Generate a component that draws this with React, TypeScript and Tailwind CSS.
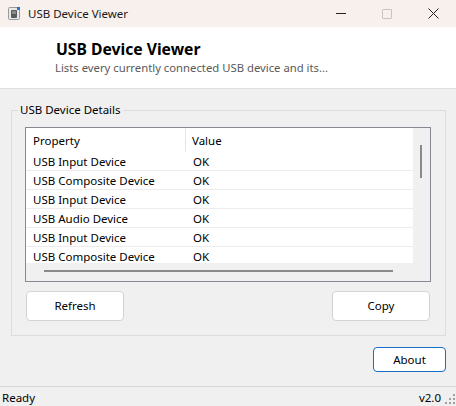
import React from "react";

const rows = [
  "USB Input Device",
  "USB Composite Device",
  "USB Input Device",
  "USB Audio Device",
  "USB Input Device",
  "USB Composite Device",
];

function AppIcon() {
  return (
    <svg width="12" height="13" viewBox="0 0 12 13">
      <rect x="0.5" y="0.5" width="11" height="12" rx="1" fill="#e8e8e8" stroke="#9a9a9a" />
      <rect x="3" y="3" width="6" height="8" rx="1" fill="#5a5a5a" />
      <rect x="4" y="4" width="4" height="3" fill="#8a8a8a" />
      <rect x="9" y="0" width="3" height="3" fill="#2f6fd0" />
    </svg>
  );
}

function Grip() {
  const dots: [number, number][] = [
    [8, 0],
    [8, 4],
    [4, 4],
    [8, 8],
    [4, 8],
    [0, 8],
  ];
  return (
    <svg width="11" height="11" viewBox="0 0 11 11">
      {dots.map(([x, y], i) => (
        <rect key={i} x={x} y={y} width="2" height="2" fill="#a0a0a0" />
      ))}
    </svg>
  );
}

export default function App() {
  return (
    <div className="w-[456px] h-[406px] flex flex-col bg-[#f0f0f0] font-['Noto_Sans',sans-serif] text-[11.5px] text-black overflow-hidden">
      {/* Title bar */}
      <div className="h-[27px] shrink-0 bg-[#f8f0ec] flex items-center">
        <div className="pl-[8px] flex items-center">
          <AppIcon />
        </div>
        <span className="ml-[8px] text-[11.5px] leading-none text-[#1a1a1a]">USB Device Viewer</span>
        <div className="ml-auto flex h-full">
          <div className="w-[46px] h-full flex items-center justify-center">
            <div className="w-[10px] h-[1px] bg-[#222]" />
          </div>
          <div className="w-[46px] h-full flex items-center justify-center">
            <div className="w-[10px] h-[10px] border border-[#c8c4c2] rounded-[1px]" />
          </div>
          <div className="w-[46px] h-full flex items-center justify-center">
            <svg width="11" height="11" viewBox="0 0 11 11">
              <path d="M0.5 0.5 L10.5 10.5 M10.5 0.5 L0.5 10.5" stroke="#222" strokeWidth="1" />
            </svg>
          </div>
        </div>
      </div>

      {/* Header */}
      <div className="h-[62px] shrink-0 bg-white border-b border-[#e0e0e0] pl-[56px] pt-[12px]">
        <div className="text-[15.7px] font-bold leading-[21px] text-black">USB Device Viewer</div>
        <div className="text-[11.3px] leading-[16px] text-[#5a5a5a] -ml-[1px]">
          Lists every currently connected USB device and its...
        </div>
      </div>

      {/* Body */}
      <div className="flex-1 flex flex-col pl-[11px] pr-[10px]">
        <div className="relative mt-[21px] h-[226px] border border-[#dcdcdc] flex flex-col pl-[13px] pr-[14px] pt-[16px]">
          <span className="absolute -top-[9px] left-[6px] px-[2px] bg-[#f0f0f0] leading-[16px]">
            USB Device Details
          </span>

          {/* Table */}
          <div className="h-[155px] border border-[#868a91] bg-[#f0f0f0] flex flex-col">
            <div className="flex h-[135px]">
              <div className="w-[387px] bg-white overflow-hidden">
                <div className="flex h-[24px] items-center">
                  <div className="w-[160px] h-full pl-[7px] pt-[2px] flex items-center border-r border-[#e5e5e5]">Property</div>
                  <div className="pl-[6px] pt-[2px]">Value</div>
                </div>
                {rows.map((r, i) => (
                  <div key={i} className="flex h-[19px] items-center pt-[2px] border-b border-[#ececec] shrink-0">
                    <div className="w-[160px] pl-[7px]">{r}</div>
                    <div className="pl-[7px]">OK</div>
                  </div>
                ))}
              </div>
              <div className="w-[17px] relative">
                <div className="absolute left-[7px] top-[17px] w-[2px] h-[33px] bg-[#8a8a8a]" />
              </div>
            </div>
            <div className="h-[18px] relative">
              <div className="absolute left-[18px] top-[7px] w-[349px] h-[2px] bg-[#8a8a8a]" />
            </div>
          </div>

          {/* Buttons */}
          <div className="flex justify-between mt-[9px] pl-[1px] pr-[1px]">
            <button className="w-[98px] h-[30px] bg-white border border-[#d3d3d3] rounded-[4px]">
              Refresh
            </button>
            <button className="w-[98px] h-[30px] bg-white border border-[#d3d3d3] rounded-[4px]">
              Copy
            </button>
          </div>
        </div>

        <div className="flex justify-end mt-[11px]">
          <button className="w-[73px] h-[25px] bg-white border border-[#1a6fc4] rounded-[4px]">
            About
          </button>
        </div>
      </div>

      {/* Status bar */}
      <div className="h-[20px] shrink-0 border-t border-[#d8d8d8] flex items-end">
        <span className="pl-[2px] leading-[17px]">Ready</span>
        <span className="ml-auto leading-[17px]">v2.0</span>
        <div className="ml-[4px] mr-[0px] mb-[1px] flex items-end">
          <Grip />
        </div>
      </div>
    </div>
  );
}
